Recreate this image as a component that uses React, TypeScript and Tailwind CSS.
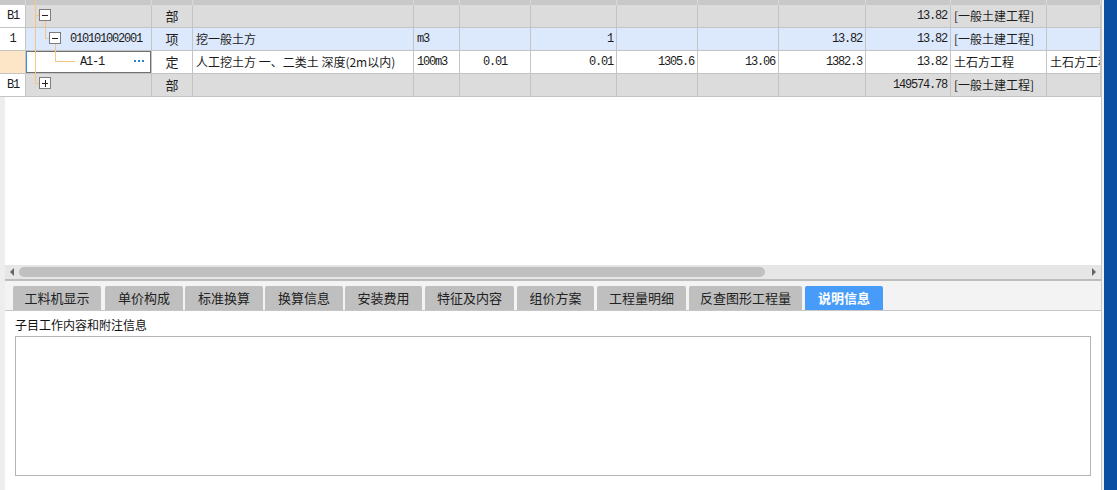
import React from 'react';

type Cell = { t?: string; a?: 'l' | 'c' | 'r'; m?: boolean };

const rowBg = ['bg-[#dcdcdc]', 'bg-[#dce8fb]', 'bg-white', 'bg-[#dcdcdc]'];
const headBg = ['bg-white', 'bg-white', 'bg-[#fde5c7]', 'bg-white'];

const rows: Cell[][] = [
  [{ t: 'B1', m: true }, {}, { t: '部', a: 'c' }, {}, {}, {}, {}, {}, {}, {}, { t: '13.82', a: 'r', m: true }, { t: '[一般土建工程]' }, {}],
  [{ t: '1', a: 'c', m: true }, {}, { t: '项', a: 'c' }, { t: '挖一般土方' }, { t: 'm3', m: true }, {}, { t: '1', a: 'r', m: true }, {}, {}, { t: '13.82', a: 'r', m: true }, { t: '13.82', a: 'r', m: true }, { t: '[一般土建工程]' }, {}],
  [{}, {}, { t: '定', a: 'c' }, { t: '人工挖土方 一、二类土 深度(2m以内)' }, { t: '100m3', m: true }, { t: '0.01', a: 'c', m: true }, { t: '0.01', a: 'r', m: true }, { t: '1305.6', a: 'r', m: true }, { t: '13.06', a: 'r', m: true }, { t: '1382.3', a: 'r', m: true }, { t: '13.82', a: 'r', m: true }, { t: '土石方工程' }, { t: '土石方工程' }],
  [{ t: 'B1', m: true }, {}, { t: '部', a: 'c' }, {}, {}, {}, {}, {}, {}, {}, { t: '149574.78', a: 'r', m: true }, { t: '[一般土建工程]' }, {}],
];

const tabs = [
  { name: '工料机显示', w: 'w-[88px] ml-0' },
  { name: '单价构成', w: 'w-[78px] ml-[4px]' },
  { name: '标准换算', w: 'w-[78px] ml-[2px]' },
  { name: '换算信息', w: 'w-[78px] ml-[2px]' },
  { name: '安装费用', w: 'w-[77px] ml-[2px]' },
  { name: '特征及内容', w: 'w-[89px] ml-[3px]' },
  { name: '组价方案', w: 'w-[77px] ml-[3px]' },
  { name: '工程量明细', w: 'w-[89px] ml-[3px]' },
  { name: '反查图形工程量', w: 'w-[113px] ml-[3px]' },
  { name: '说明信息', w: 'w-[78px] ml-[3px]', active: true },
];

const gridCols = 'grid grid-cols-[26px_126px_41px_221px_46px_71px_86px_81px_81px_87px_85px_96px_54px]';
const cjk = "font-['Noto_Sans_CJK_SC','Liberation_Sans',sans-serif]";
const mono = "font-['Liberation_Mono','Noto_Sans_CJK_SC',monospace] tracking-[-1.2px] text-[12px]";

function CodeCell({ r }: { r: number }) {
  if (r === 1)
    return <span className={`pl-[41px] ${mono}`}>010101002001</span>;
  if (r === 2)
    return (
      <>
        <span className={`pl-[51px] ${mono}`}>A1-1</span>
        <div className="absolute -left-px -top-px -right-px -bottom-px border-2 border-[#6f6f6f] border-l-[#3a8ee6]" />
      </>
    );
  return null;
}

function TreeLines() {
  const line = '#f6c584';
  return (
    <svg className="absolute left-0 top-0 pointer-events-none" width="160" height="97">
      <path d="M35.5 0 V83.5 H39 M35.5 15.5 H39 M45.5 21 V38.5 H49 M55.5 44 V61.5 H75" stroke={line} fill="none" />
      <rect x="39.5" y="9.5" width="11" height="11" fill="white" stroke="#7d7d7d" />
      <path d="M42 15.5 H48" stroke="#222" />
      <rect x="49.5" y="32.5" width="11" height="11" fill="white" stroke="#7d7d7d" />
      <path d="M52 38.5 H58" stroke="#222" />
      <rect x="39.5" y="77.5" width="11" height="11" fill="white" stroke="#7d7d7d" />
      <path d="M42 83.5 H48 M45.5 80 V87" stroke="#222" />
      <rect x="134" y="60" width="2" height="2" fill="#2d7fd2" />
      <rect x="138" y="60" width="2" height="2" fill="#2d7fd2" />
      <rect x="142" y="60" width="2" height="2" fill="#2d7fd2" />
    </svg>
  );
}

export default function App() {
  return (
    <div className={`w-[1117px] h-[490px] flex bg-white text-[#1c1c1c] text-[12px] overflow-hidden ${cjk}`}>
      <div className="w-[1102px] flex flex-col border-r border-[#c6c6c6]">
        {/* grid */}
        <div className="relative">
          <div className={`${gridCols} h-[5px] bg-[#c8c8c8]`}>
            {Array.from({ length: 13 }).map((_, i) => (
              <div key={i} className="border-r border-[#dadada]" />
            ))}
          </div>
          {rows.map((row, r) => (
            <div key={r} className={`${gridCols} h-[23px]`}>
              {row.map((c, i) => (
                <div
                  key={i}
                  className={`relative flex items-center overflow-hidden whitespace-nowrap border-r border-b border-[#c4c4c4] ${
                    i === 0 ? headBg[r] : rowBg[r]
                  } ${
                    c.a === 'r' ? 'justify-end pr-[3px]' : c.a === 'c' ? 'justify-center' : i === 0 ? 'pl-[7px]' : 'pl-[3px]'
                  } ${c.m ? mono : ''} ${i === 2 ? 'text-[13px]' : ''}`}
                >
                  {i === 1 ? <CodeCell r={r} /> : c.t}
                </div>
              ))}
            </div>
          ))}
          <TreeLines />
        </div>

        {/* lower area */}
        <div className="flex flex-1">
          <div className="w-[5px] bg-[#eeeeee]" />
          <div className="flex-1 flex flex-col">
            <div className="h-[168px] bg-white" />
            <div className="h-[14px] bg-[#e6e6e6] flex items-center">
              <div className="w-[14px] flex justify-center">
                <div className="w-0 h-0 border-y-[4px] border-y-transparent border-r-[4px] border-r-[#666]" />
              </div>
              <div className="w-[746px] h-[10px] rounded-full bg-[#c0c0c0]" />
              <div className="flex-1" />
              <div className="w-[14px] flex justify-center">
                <div className="w-0 h-0 border-y-[4px] border-y-transparent border-l-[4px] border-l-[#666]" />
              </div>
            </div>
            <div className="h-[2px] bg-[#bdbdbd]" />
            <div className="h-[30px] bg-[#f3f3f3] border-b border-[#c6c6c6] flex items-end pl-[8px]">
              {tabs.map((t) => (
                <div
                  key={t.name}
                  className={`${t.w} h-[24px] rounded-t-[2px] flex items-center justify-center text-[13px] ${
                    t.active ? 'bg-[#469cf8] text-white font-bold' : 'bg-[#bfbfbf] text-[#222]'
                  }`}
                >
                  {t.name}
                </div>
              ))}
            </div>
            <div className="pl-[10px] pt-[5px] h-[25px] text-[12px] leading-[18px] text-[#111]">子目工作内容和附注信息</div>
            <div className="ml-[10px] w-[1076px] h-[140px] border border-[#b4b4b4] bg-white" />
          </div>
        </div>
      </div>
      <div className="w-[2px] bg-[#f2f2f2]" />
      <div className="w-[13px] bg-[#0b4fa3]" />
    </div>
  );
}
